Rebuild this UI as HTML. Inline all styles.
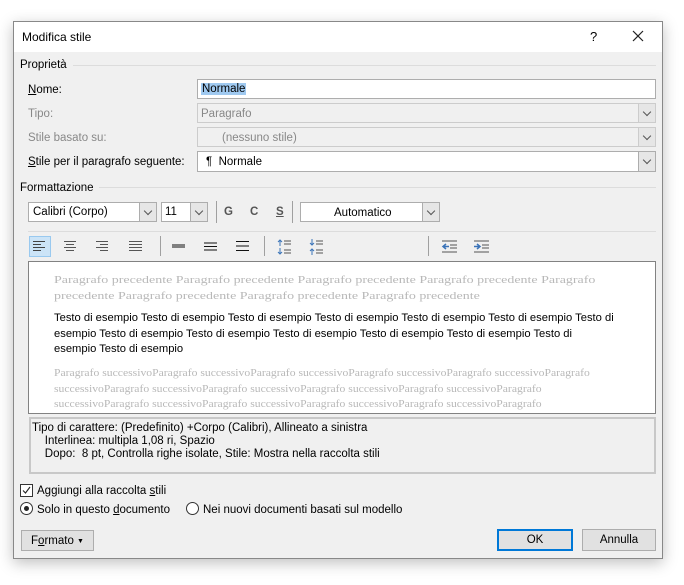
<!DOCTYPE html>
<html><head><meta charset="utf-8"><style>
*{margin:0;padding:0;box-sizing:border-box}
body{width:684px;height:585px;background:#fff;font-family:"Liberation Sans",sans-serif;font-size:11.5px;color:#000;position:relative;overflow:hidden}
.a{position:absolute;white-space:nowrap}
#dlg{position:absolute;left:13px;top:21px;width:650px;height:538px;background:#f0f0f0;border:1px solid #888;box-shadow:0 4px 14px rgba(0,0,0,.25)}
#tb{position:absolute;left:13px;top:21px;width:650px;height:31px;background:#fff;border:1px solid #888;border-bottom:none}
.box{position:absolute;border:1px solid #adadad;background:#fff}
.dis{background:#f0f0f0;border-color:#ccc}
.dd{position:absolute;right:0;top:0;bottom:0;width:17px;background:#e6e6e6;border-left:1px solid #adadad}
.dd:after{content:"";position:absolute;left:5px;top:5px;width:5px;height:5px;border-right:1px solid #555;border-bottom:1px solid #555;transform:rotate(45deg)}
.line{position:absolute;height:1px;background:#dcdcdc}
.gray{color:#888}
.sep{position:absolute;width:1px;background:#a0a0a0}
.pv{position:absolute;left:54px;font-size:11.2px;line-height:15.5px;white-space:nowrap}
.ser{font-family:"Liberation Serif",serif;color:#b8b8b8;font-size:11px;transform-origin:0 0}
.btn{position:absolute;border:1px solid #adadad;background:#e1e1e1;text-align:center;line-height:19px}
u{text-decoration:underline}
.ic{position:absolute}
</style></head><body>
<div id="dlg"></div>
<div id="tb"></div>
<div class="a" style="left:22px;top:30px;font-size:12px">Modifica stile</div>
<div class="a" style="left:590px;top:29px;font-size:13px">?</div>
<svg class="ic" style="left:632px;top:30px" width="12" height="12"><path d="M1 1L11 11M11 1L1 11" stroke="#222" stroke-width="1.2"/></svg>

<div class="a" style="left:20px;top:59px">Proprietà</div>
<div class="line" style="left:73px;top:65px;width:583px"></div>
<div class="a" style="left:28px;top:84px"><u>N</u>ome:</div>
<div class="box" style="left:197px;top:79px;width:459px;height:20px"><span class="a" style="left:3px;top:3px;background:#9fc9f0;padding:0 1px">Normale</span></div>
<div class="a gray" style="left:28px;top:108px">Tipo:</div>
<div class="box dis" style="left:197px;top:103px;width:459px;height:20px"><span class="a gray" style="left:3px;top:4px">Paragrafo</span><div class="dd" style="background:#e6e6e6;border-color:#ccc"></div></div>
<div class="a gray" style="left:28px;top:132px">Stile basato su:</div>
<div class="box dis" style="left:197px;top:127px;width:459px;height:20px"><span class="a gray" style="left:24px;top:4px">(nessuno stile)</span><div class="dd" style="border-color:#ccc"></div></div>
<div class="a" style="left:28px;top:156px"><u>S</u>tile per il paragrafo seguente:</div>
<div class="box" style="left:197px;top:151px;width:459px;height:21px"><span class="a" style="left:8px;top:4px">¶&nbsp; Normale</span><div class="dd"></div></div>

<div class="a" style="left:20px;top:182px">Formattazione</div>
<div class="line" style="left:99px;top:187px;width:557px"></div>
<div class="box" style="left:28px;top:202px;width:129px;height:20px"><span class="a" style="left:4px;top:3px">Calibri (Corpo)</span><div class="dd"></div></div>
<div class="box" style="left:161px;top:202px;width:47px;height:20px"><span class="a" style="left:3px;top:3px">11</span><div class="dd"></div></div>
<div class="sep" style="left:216px;top:201px;height:22px"></div>
<div class="a" style="left:224px;top:206px;font-weight:bold;color:#555">G</div>
<div class="a" style="left:250px;top:206px;font-weight:bold;color:#555">C</div>
<div class="a" style="left:276px;top:206px;font-weight:bold;color:#555;text-decoration:underline">S</div>
<div class="sep" style="left:292px;top:201px;height:22px"></div>
<div class="box" style="left:300px;top:202px;width:140px;height:20px"><span class="a" style="left:33px;top:4px">Automatico</span><div class="dd"></div></div>
<div class="line" style="left:28px;top:231px;width:628px"></div>

<div class="a" style="left:29px;top:236px;width:22px;height:21px;background:#cce4f7;border:1px solid #99c9ef"></div>
<svg class="ic" style="left:0;top:0" width="684" height="270" stroke="#555" stroke-width="1" fill="none">
<path d="M33 241.5h12M33 244.5h8M33 247.5h12M33 250.5h8" stroke="#444"/>
<path d="M64 241.5h12M66 244.5h8M64 247.5h12M66 250.5h8"/>
<path d="M96 241.5h12M100 244.5h8M96 247.5h12M100 250.5h8"/>
<path d="M129 241.5h13M129 244.5h13M129 247.5h13M129 250.5h13"/>
<path d="M172 245h13M172 247h13" stroke="#111"/>
<path d="M204 243h13M204 246.5h13M204 250h13" stroke="#111"/>
<path d="M236 241.5h13M236 246h13M236 250.5h13" stroke="#111"/>
<path d="M284 241h7M284 244h7M284 250h7M284 253h7" />
<path d="M280 240v6M278 242l2-2 2 2M280 248v6M278 252l2 2 2-2" stroke="#3a73b8"/>
<path d="M316 241h7M316 244h7M316 250h7M316 253h7"/>
<path d="M312 239v6M310 243l2 2 2-2M312 249v6M310 251l2-2 2 2" stroke="#3a73b8"/>
<path d="M442 241h15M450 245h7M450 248h7M442 252h15"/>
<path d="M443 246.5h6M446 244l-3 2.5 3 2.5" stroke="#3a73b8" stroke-width="1.5"/>
<path d="M474 241h15M482 245h7M482 248h7M474 252h15"/>
<path d="M474 246.5h6M477 244l3 2.5-3 2.5" stroke="#3a73b8" stroke-width="1.5"/>
</svg>
<div class="sep" style="left:160px;top:236px;height:20px"></div>
<div class="sep" style="left:264px;top:236px;height:20px"></div>
<div class="sep" style="left:428px;top:236px;height:20px"></div>

<div class="box" style="left:28px;top:261px;width:628px;height:153px;border-color:#828282"></div>
<div class="pv ser" style="top:273px;transform:scaleX(1.27)">Paragrafo precedente Paragrafo precedente Paragrafo precedente Paragrafo precedente Paragrafo<br>precedente Paragrafo precedente Paragrafo precedente Paragrafo precedente</div>
<div class="pv" style="top:311px">Testo di esempio Testo di esempio Testo di esempio Testo di esempio Testo di esempio Testo di esempio Testo di<br>esempio Testo di esempio Testo di esempio Testo di esempio Testo di esempio Testo di esempio Testo di<br>esempio Testo di esempio</div>
<div class="pv ser" style="top:366px;transform:scaleX(1.06)">Paragrafo successivoParagrafo successivoParagrafo successivoParagrafo successivoParagrafo successivoParagrafo<br>successivoParagrafo successivoParagrafo successivoParagrafo successivoParagrafo successivoParagrafo<br>successivoParagrafo successivoParagrafo successivoParagrafo successivoParagrafo successivoParagrafo</div>

<div class="box" style="left:29px;top:417px;width:627px;height:57px;background:#f0f0f0;border-color:#c8c8c8;border-width:2px"></div>
<div class="a" style="left:32px;top:422px;line-height:13px">Tipo di carattere: (Predefinito) +Corpo (Calibri), Allineato a sinistra<br>&nbsp;&nbsp;&nbsp;&nbsp;Interlinea: multipla 1,08 ri, Spazio<br>&nbsp;&nbsp;&nbsp;&nbsp;Dopo:&nbsp; 8 pt, Controlla righe isolate, Stile: Mostra nella raccolta stili</div>

<div class="a" style="left:20px;top:484px;width:13px;height:13px;border:1px solid #333;background:#fff"></div>
<svg class="ic" style="left:21px;top:485px" width="11" height="11"><path d="M2 5.5l2.5 2.5L9 2" stroke="#222" fill="none" stroke-width="1.1"/></svg>
<div class="a" style="left:37px;top:485px">Aggiungi alla raccolta <u>s</u>tili</div>
<div class="a" style="left:20px;top:502px;width:13px;height:13px;border:1px solid #333;border-radius:50%;background:#fff"></div>
<div class="a" style="left:24px;top:506px;width:5px;height:5px;border-radius:50%;background:#222"></div>
<div class="a" style="left:37px;top:504px">Solo in questo <u>d</u>ocumento</div>
<div class="a" style="left:186px;top:502px;width:13px;height:13px;border:1px solid #333;border-radius:50%;background:#fff"></div>
<div class="a" style="left:203px;top:504px">Nei nuovi documenti basati sul modello</div>

<div class="btn" style="left:21px;top:530px;width:73px;height:21px;line-height:21px">F<u>o</u>rmato <span style="font-size:7px;vertical-align:1px">▼</span></div>
<div class="btn" style="left:497px;top:529px;width:76px;height:22px;border:2px solid #0078d7;line-height:19px">OK</div>
<div class="btn" style="left:582px;top:529px;width:74px;height:22px;line-height:21px">Annulla</div>
</body></html>
